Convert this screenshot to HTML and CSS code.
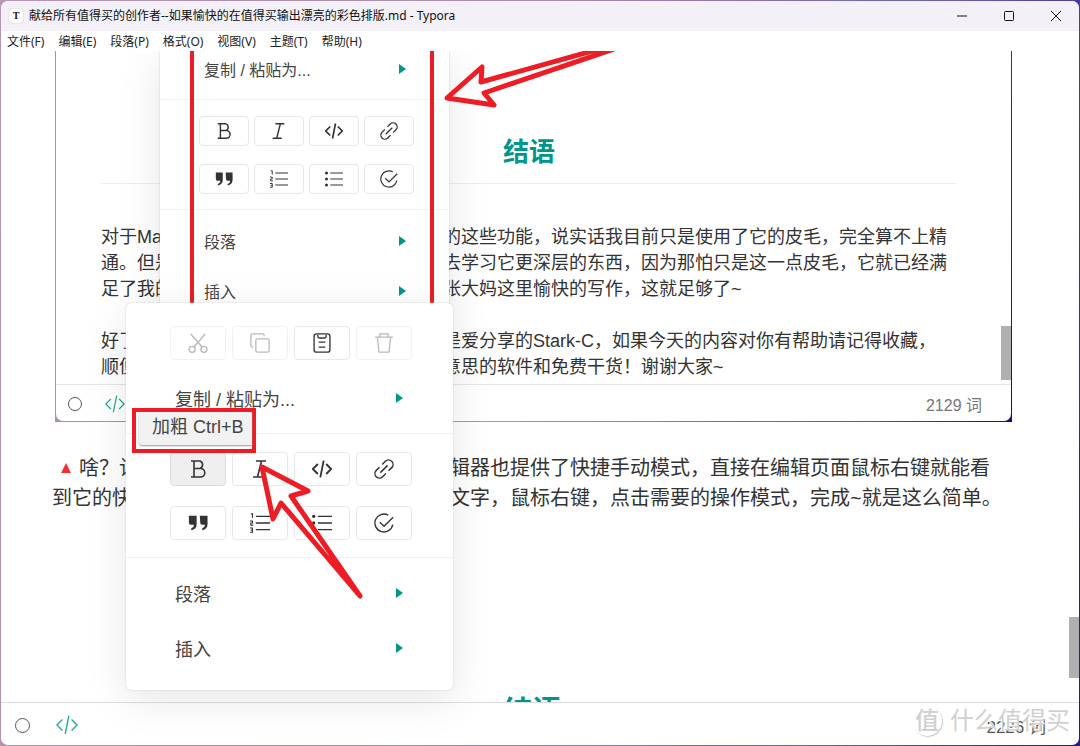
FILE: index.html
```html
<!DOCTYPE html>
<html lang="zh-CN">
<head>
<meta charset="utf-8">
<title>Typora</title>
<link rel="stylesheet" href="styles.css">
</head>
<body>
<svg class="defs" aria-hidden="true">
  <symbol id="bold" viewBox="1 2 20 20"><path d="M4 4h9a4 4 0 0 1 0 7.500H7M13 11.500a4.200 4.200 0 0 1 1 8.500H4M7 4v16"/></symbol>
  <symbol id="italic" viewBox="3 2 20 20"><path d="M9 4h10M6 20h10M14.500 4l-4 16"/></symbol>
  <symbol id="code" viewBox="0 0 24 24"><path d="M7 6l-6 6 6 6M17 6l6 6-6 6M14 2l-4 20"/></symbol>
  <symbol id="link" viewBox="1 1 22 22"><path d="M8 16l8-8M10 7l3.500-3.500a4.900 4.900 0 0 1 7 7L17 14M14 17l-3.500 3.500a4.900 4.900 0 0 1-7-7L7 10"/></symbol>
  <symbol id="quote" viewBox="1 1 22 22"><path class="solid" d="M2 4h8.500v9c0 4-2 6-6 7v-2c2-1 3-2 3-4H4q-2 0-2-2zM14 4h8.500v9c0 4-2 6-6 7v-2c2-1 3-2 3-4h-3q-2 0-2-2z"/></symbol>
  <symbol id="ordered" viewBox="0 0 24 24"><path d="M7 4h17M7 12h17M7 20h17"/><path class="fine" d="M1 1h2v5M0 9.500h3v2.500H1v2.500h3M0 18h3v5H0M1 20.500h2"/></symbol>
  <symbol id="bullets" viewBox="0 0 24 24"><path d="M7 4h17M7 12h17M7 20h17"/><circle class="solid" cx="2" cy="4" r="2"/><circle class="solid" cx="2" cy="12" r="2"/><circle class="solid" cx="2" cy="20" r="2"/></symbol>
  <symbol id="task" viewBox="0 0 24 24"><path d="M17 2.500A10.800 10.800 0 1 0 22.500 14M7 11l5 5L23 5"/></symbol>
  <symbol id="cut" viewBox="1 1 22 22"><path d="M4 2l13 15M20 2L7 17"/><circle cx="5.500" cy="19" r="3.300"/><circle cx="18.500" cy="19" r="3.300"/></symbol>
  <symbol id="copy" viewBox="0 0 24 24"><rect x="7" y="7" width="16" height="16" rx="2"/><path d="M4 17H3q-2 0-2-2V3q0-2 2-2h12q2 0 2 2v1"/></symbol>
  <symbol id="paste" viewBox="0 0 24 24"><rect x="2.500" y="1" width="19" height="22" rx="3"/><path d="M7 2v2q0 2 2 2h6q2 0 2-2V2M8 11h8M8 17h8"/></symbol>
  <symbol id="trash" viewBox="0 0 24 24"><path d="M1 5h22M7 5V1h10v4M4 5l2 18h12l2-18"/></symbol>
</svg>
<div class="window">
  <header class="titlebar">
    <span class="logo">T</span>
    <h1 class="title">献给所有值得买的创作者--如果愉快的在值得买输出漂亮的彩色排版.md - Typora</h1>
    <div class="controls">
      <button aria-label="最小化"><svg viewBox="0 0 10 10"><path d="M0 5h10"/></svg></button>
      <button aria-label="最大化"><svg viewBox="0 0 10 10"><rect x=".5" y=".5" width="9" height="9" rx="1"/></svg></button>
      <button aria-label="关闭"><svg viewBox="0 0 10 10"><path d="M0 0l10 10M10 0L0 10"/></svg></button>
    </div>
  </header>
  <nav class="menubar">
    <button>文件(F)</button><button>编辑(E)</button><button>段落(P)</button><button>格式(O)</button><button>视图(V)</button><button>主题(T)</button><button>帮助(H)</button>
  </nav>

  <main class="editor">
    <figure class="shot">
      <div class="shot-page">
        <div class="shot-body">
          <h2 class="shot-heading">结语</h2>
          <p class="shot-text">
            <span class="line"><span>对于Ma</span><span>的这些功能，说实话我目前只是使用了它的皮毛，完全算不上精</span></span>
            <span class="line"><span>通。但是</span><span>去学习它更深层的东西，因为那怕只是这一点皮毛，它就已经满</span></span>
            <span class="line"><span>足了我的</span><span>张大妈这里愉快的写作，这就足够了~</span></span>
          </p>
          <p class="shot-text">
            <span class="line"><span>好了</span><span>是爱分享的Stark-C，如果今天的内容对你有帮助请记得收藏，</span></span>
            <span class="line"><span>顺便</span><span>意思的软件和免费干货！谢谢大家~</span></span>
          </p>
        </div>
        <span class="shot-thumb"></span>
        <div class="shot-status">
          <span class="ring"></span>
          <svg class="src"><use href="#code"/></svg>
          <span class="count">2129 词</span>
        </div>
      </div>
      <div class="menu small">
        <div class="item"><span>复制 / 粘贴为...</span><i class="caret"></i></div>
        <div class="tools">
          <button aria-label="加粗"><svg><use href="#bold"/></svg></button>
          <button aria-label="斜体"><svg><use href="#italic"/></svg></button>
          <button class="strong" aria-label="代码"><svg><use href="#code"/></svg></button>
          <button aria-label="链接"><svg><use href="#link"/></svg></button>
          <button aria-label="引用"><svg><use href="#quote"/></svg></button>
          <button aria-label="有序列表"><svg><use href="#ordered"/></svg></button>
          <button aria-label="无序列表"><svg><use href="#bullets"/></svg></button>
          <button aria-label="任务列表"><svg><use href="#task"/></svg></button>
        </div>
        <div class="item"><span>段落</span><i class="caret"></i></div>
        <div class="item"><span>插入</span><i class="caret"></i></div>
      </div>
      <div class="frame"></div>
      <svg class="arrow-top" viewBox="0 0 180 60"><path d="M5 47L40 16 39 31 240 -25 42 42 52 54z"/></svg>
    </figure>

    <p class="body-text">
      <span class="line"><span><svg class="tri" viewBox="0 0 10 10"><path d="M5 0l5 10H0z"/></svg>啥？让</span><span>辑器也提供了快捷手动模式，直接在编辑页面鼠标右键就能看</span></span>
      <span class="line"><span>到它的快</span><span>文字，鼠标右键，点击需要的操作模式，完成~就是这么简单。</span></span>
    </p>
    <h2 class="next-heading">结语</h2>
    <span class="thumb"></span>
  </main>

  <footer class="status">
    <span class="ring"></span>
    <svg class="src"><use href="#code"/></svg>
    <span class="count">2226 词</span>
  </footer>

  <div class="menu large">
    <div class="tools">
      <button disabled aria-label="剪切"><svg><use href="#cut"/></svg></button>
      <button disabled aria-label="复制"><svg><use href="#copy"/></svg></button>
      <button aria-label="粘贴"><svg><use href="#paste"/></svg></button>
      <button disabled aria-label="删除"><svg><use href="#trash"/></svg></button>
    </div>
    <div class="item"><span>复制 / 粘贴为...</span><i class="caret"></i></div>
    <div class="tools marks">
      <button class="active" aria-label="加粗"><svg><use href="#bold"/></svg></button>
      <button aria-label="斜体"><svg><use href="#italic"/></svg></button>
      <button class="strong" aria-label="代码"><svg><use href="#code"/></svg></button>
      <button aria-label="链接"><svg><use href="#link"/></svg></button>
      <button aria-label="引用"><svg><use href="#quote"/></svg></button>
      <button aria-label="有序列表"><svg><use href="#ordered"/></svg></button>
      <button aria-label="无序列表"><svg><use href="#bullets"/></svg></button>
      <button aria-label="任务列表"><svg><use href="#task"/></svg></button>
    </div>
    <div class="item"><span>段落</span><i class="caret"></i></div>
    <div class="item"><span>插入</span><i class="caret"></i></div>
    <div class="tooltip"><span>加粗 Ctrl+B</span></div>
    <svg class="arrow" viewBox="0 0 110 140"><path d="M7 7L18 59 26 43 105 136 36 36 53 31z"/></svg>
  </div>

  <div class="watermark"><span class="seal">值</span><span>什么值得买</span></div>
</div>
</body>
</html>
```

FILE: styles.css
```css
* { box-sizing: border-box; }

body {
  margin: 0;
  height: 100vh;
  padding: 1px;
  background: linear-gradient(100deg, #b795b4, #a88cae 45%, #6a58b0 80%, #2c1680);
  font-family: "Liberation Sans", "Noto Sans CJK SC", sans-serif;
  color: #333;
  overflow: hidden;
}

h1, h2, p, figure { margin: 0; }
button { font: inherit; color: inherit; padding: 0; border: 0; background: none; }
svg { fill: none; stroke: currentColor; stroke-width: 2; }
.defs { display: none; }
.solid { fill: currentColor; stroke: none; }
.fine { stroke-width: 1.3; }

.window {
  position: relative;
  display: flex;
  flex-direction: column;
  height: 100%;
  border-radius: 7px;
  background: #fff;
  overflow: hidden;
}

/* title and menu bars */
.titlebar {
  display: flex;
  align-items: center;
  height: 30px;
  padding-left: 8px;
  background: #f3f0f8;
  color: #111;
  font-family: "Noto Sans", "Noto Sans CJK SC", sans-serif;
}
.logo {
  width: 14px;
  height: 14px;
  margin-right: 6px;
  border-radius: 3px;
  background: #fff;
  box-shadow: 0 0 1px #888;
  font: bold 10px/14px "Liberation Serif", serif;
  text-align: center;
}
.title { flex: 1; font-size: 12px; line-height: 16px; font-weight: 400; white-space: nowrap; }
.controls { display: flex; }
.controls button { width: 47px; height: 30px; display: grid; place-items: center; }
.controls svg { width: 10px; height: 10px; stroke-width: 1; overflow: visible; }
.menubar {
  display: flex;
  gap: 14px;
  height: 20px;
  padding-left: 6px;
  font: 12px/22px "Noto Sans", "Noto Sans CJK SC", sans-serif;
  color: #222;
}

/* document */
.editor {
  position: relative;
  flex: 1;
  min-height: 0;
  padding: 0 67px 0 51px;
  overflow: hidden;
}
.line { display: flex; white-space: nowrap; }
.line > span:first-child { flex: none; }
.body-text { margin-top: 31px; font-size: 20px; line-height: 30px; }
.body-text .line > span:first-child { width: 398px; }
.tri { width: 10px; height: 10px; margin: 0 8px 2px 9px; stroke: none; fill: #f2302f; }
.next-heading {
  margin-top: 179px;
  font-size: 29px;
  line-height: 40px;
  text-align: center;
  color: #00968a;
}
.thumb {
  position: absolute;
  right: 0;
  top: 566px;
  width: 10px;
  height: 61px;
  background: #b0b0b0;
}

/* embedded picture of the editor */
.shot {
  position: relative;
  margin: 0 0 0 3px;
  height: 371px;
  padding: 0 1px 1px;
  background: linear-gradient(100deg, #a98fb0, #b08fb8 50%, #6c50b8 85%, #1c0880);
}
.shot-page {
  position: relative;
  display: flex;
  flex-direction: column;
  height: 100%;
  background: #fff;
  border-radius: 0 0 7px 7px;
}
.shot-body { flex: 1; padding: 81px 54px 0 45px; }
.shot-heading {
  height: 52px;
  border-bottom: 1px solid #eee;
  font-size: 26px;
  line-height: 40px;
  text-align: center;
  color: #00968a;
}
.shot-text { font-size: 18px; line-height: 26px; }
.shot-text .line > span:first-child { width: 342px; }
.shot-heading + .shot-text { margin: 40px 0 26px; }
.shot-thumb {
  position: absolute;
  right: 0;
  top: 275px;
  width: 10px;
  height: 54px;
  background: #b0b0b0;
}
.shot-status, .status {
  display: flex;
  align-items: center;
  font-size: 16px;
  color: #777;
}
.shot-status { height: 37px; padding: 2px 29px 0 12px; border-top: 1px solid #e4e4e4; }
.status { height: 43px; padding: 2px 33px 0 14px; border-top: 1px solid #ddd; color: #555; font-size: 17px; }
.ring { width: 14px; height: 14px; border: 1px solid #555; border-radius: 50%; }
.status .ring { width: 15px; height: 15px; }
.src { width: 20px; height: 20px; margin-left: 23px; color: #26a69a; stroke-width: 1.5; }
.status .src { width: 22px; height: 22px; margin-left: 26px; }
.count { margin-left: auto; }

/* context menus */
.menu {
  position: absolute;
  background: #fff;
  box-shadow: 0 0 2px #ccc, 0 10px 40px rgba(0, 0, 0, .1);
  color: #444;
}
.item { display: flex; align-items: center; justify-content: space-between; }
.caret {
  border: 5px solid transparent;
  border-left: 7px solid #009688;
  border-right: 0;
}
.tools { display: grid; grid-template-columns: repeat(4, 1fr); }
.tools button {
  display: grid;
  place-items: center;
  border: 1px solid #e8e8e8;
  border-radius: 4px;
  color: #333;
}
.tools button:disabled { color: #bbb; border-color: #f2f2f2; }
.tools .active { background: #efefef; border-color: #ddd; }

.small { left: 105px; top: 0; width: 289px; height: 258px; overflow: hidden; font-size: 16px; }
.small .item { height: 50px; padding: 0 43px 0 44px; }
.small .item:first-child { height: 48px; padding-bottom: 13px; }
.small .tools {
  gap: 18px 5px;
  padding: 16px 35px 15px 39px;
  border: solid #f3f3f3;
  border-width: 1px 0;
  margin-bottom: 6px;
}
.small .tools button { height: 30px; }
.small svg { width: 18px; height: 18px; stroke-width: 1.6; }

.large {
  left: 125px;
  top: 302px;
  width: 327px;
  padding: 23px 0 15px;
  border-radius: 6px;
  font-size: 18px;
}
.large .tools { gap: 20px 6px; padding: 0 41px 0 44px; }
.large .tools button { height: 34px; }
.large .tools svg { width: 20px; height: 20px; stroke-width: 1.6; }
.large .item { height: 55px; padding: 0 50px 0 49px; }
.large .tools + .item { margin: 10px 0 8px; }
.large .marks { padding-top: 18px; padding-bottom: 17px; border: solid #f0f0f0; border-width: 1px 0; }
.large .marks + .item { margin: 7px 0 0; }
.tools .strong svg { stroke-width: 2.2; }

/* annotations */
.frame {
  position: absolute;
  left: 135px;
  top: 0;
  width: 244px;
  height: 252px;
  border: solid #ee1c24;
  border-width: 0 4px;
}
.arrow-top { position: absolute; left: 387px; top: 0; width: 180px; height: 60px; overflow: hidden; }
.arrow-top, .large .arrow { stroke: #ee1c24; stroke-width: 5; stroke-linejoin: round; }
.arrow { position: absolute; left: 129px; top: 157px; width: 110px; height: 140px; }
.tooltip {
  position: absolute;
  left: 6px;
  top: 105px;
  width: 124px;
  height: 45px;
  padding: 0 0 4px 3px;
  border: 4px solid #ee1c24;
  background: #fff;
}
.tooltip span {
  display: block;
  height: 100%;
  padding-left: 13px;
  border-radius: 0 0 0 3px;
  background: #f2f2f2;
  box-shadow: 0 1px 2px #999;
  line-height: 31px;
  white-space: nowrap;
}
.watermark {
  position: absolute;
  right: 9px;
  bottom: 9px;
  display: flex;
  align-items: center;
  gap: 8px;
  font-size: 24px;
  line-height: 30px;
  color: #d0d0d0;
  text-shadow: -1px -1px 0 #fff;
}
.seal {
  width: 30px;
  height: 30px;
  border-radius: 50%;
  background: #fff;
  box-shadow: 1px 1px 1px #ccc;
  font-weight: 500;
  text-align: center;
}
```
